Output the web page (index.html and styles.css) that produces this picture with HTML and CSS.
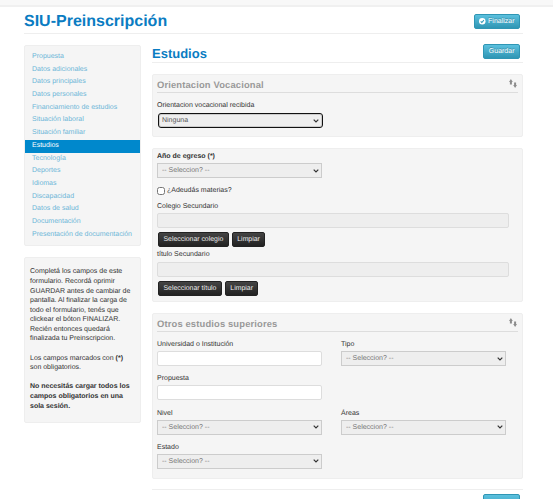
FILE: index.html
```html
<!DOCTYPE html>
<html lang="es">
<head>
 <meta charset="UTF-8">
 <title>SIU-Preinscripción</title>
 <link rel="stylesheet" href="styles.css">
</head>
<body>
 <div class="topbar"></div>
 <div class="page">
  <div class="page-header">
   <h1>SIU-Preinscripción</h1>
   <button class="btn-info btn-finalizar">
    <svg class="check" viewBox="0 0 10 10"><circle cx="5" cy="5" r="5" fill="#fff"/><path d="M2.6 5.1 4.4 6.9 7.5 3.4" fill="none" stroke="#2f96b4" stroke-width="1.6"/></svg>
    Finalizar
   </button>
  </div>
  <div class="columns">
   <div class="sidebar">
    <ul class="nav">
     <li>Propuesta</li>
     <li>Datos adicionales</li>
     <li>Datos principales</li>
     <li>Datos personales</li>
     <li>Financiamiento de estudios</li>
     <li>Situación laboral</li>
     <li>Situación familiar</li>
     <li class="active">Estudios</li>
     <li>Tecnología</li>
     <li>Deportes</li>
     <li>Idiomas</li>
     <li>Discapacidad</li>
     <li>Datos de salud</li>
     <li>Documentación</li>
     <li>Presentación de documentación</li>
    </ul>
    <div class="help">
     <p>Completá los campos de este formulario. Recordá oprimir GUARDAR antes de cambiar de pantalla. Al finalizar la carga de todo el formulario, tenés que clickear el bóton FINALIZAR. Recién entonces quedará finalizada tu Preinscripcion.</p>
     <p>Los campos marcados con <b>(*)</b> son obligatorios.</p>
     <p><b>No necesitás cargar todos los campos obligatorios en una sola sesión.</b></p>
    </div>
   </div>
   <div class="main">
    <div class="main-header">
     <h2>Estudios</h2>
     <button class="btn-info btn-guardar">Guardar</button>
    </div>

    <div class="panel panel-orientacion">
     <div class="legend">
      <span>Orientacion Vocacional</span>
      <svg class="move" viewBox="0 0 8 9"><path d="M0 3 1.9 0 3.8 3H2.9V5.6H.9V3ZM4.2 6H5.1V3.4H7.1V6H8L6.1 9Z" fill="#8c8c8c"/></svg>
     </div>
     <label class="lbl lbl-focus">Orientacion vocacional recibida</label>
     <select class="sel sel-focus"><option>Ninguna</option></select>
    </div>

    <div class="panel panel-egreso">
     <label class="lbl lbl-first"><b>Año de egreso (*)</b></label>
     <select class="sel"><option>-- Seleccion? --</option></select>
     <label class="check-row"><input type="checkbox"> ¿Adeudás materias?</label>
     <label class="lbl">Colegio Secundario</label>
     <input class="txt txt-wide" type="text" disabled>
     <div class="btn-row">
      <button class="btn-dark">Seleccionar colegio</button>
      <button class="btn-dark">Limpiar</button>
     </div>
     <label class="lbl lbl-tight">título Secundario</label>
     <input class="txt txt-wide" type="text" disabled>
     <div class="btn-row">
      <button class="btn-dark">Seleccionar título</button>
      <button class="btn-dark">Limpiar</button>
     </div>
    </div>

    <div class="panel panel-otros">
     <div class="legend">
      <span>Otros estudios superiores</span>
      <svg class="move" viewBox="0 0 8 9"><path d="M0 3 1.9 0 3.8 3H2.9V5.6H.9V3ZM4.2 6H5.1V3.4H7.1V6H8L6.1 9Z" fill="#8c8c8c"/></svg>
     </div>
     <div class="form-grid">
      <div class="field">
       <label class="lbl">Universidad o Institución</label>
       <input class="txt" type="text">
      </div>
      <div class="field">
       <label class="lbl">Tipo</label>
       <select class="sel"><option>-- Seleccion? --</option></select>
      </div>
      <div class="field">
       <label class="lbl">Propuesta</label>
       <input class="txt" type="text">
      </div>
      <div class="field"></div>
      <div class="field">
       <label class="lbl">Nivel</label>
       <select class="sel"><option>-- Seleccion? --</option></select>
      </div>
      <div class="field">
       <label class="lbl">Áreas</label>
       <select class="sel"><option>-- Seleccion? --</option></select>
      </div>
      <div class="field">
       <label class="lbl">Estado</label>
       <select class="sel"><option>-- Seleccion? --</option></select>
      </div>
     </div>
    </div>

    <div class="main-footer">
     <button class="btn-info btn-footer">Guardar</button>
    </div>
   </div>
  </div>
 </div>
</body>
</html>
```

FILE: styles.css
```css
html, body {
 height: 499px;
 overflow: hidden;
}
body {
 margin: 0;
 background: #fff;
 color: #333;
 font-family: "Liberation Sans", Arial, sans-serif;
 font-size: 7px;
 text-rendering: geometricPrecision;
}
.topbar {
 height: 5px;
 background: #f8f8f8;
 border-bottom: 2px solid #f0f0f0;
}
.page {
 width: 499px;
 margin-left: 24px;
}
.page-header {
 display: flex;
 justify-content: space-between;
 align-items: flex-start;
 height: 26px;
 border-bottom: 1px solid #eee;
}
h1 {
 margin: 6px 0 0;
 font-size: 16px;
 line-height: 18px;
 color: #0a7cc2;
}
.btn-info {
 height: 15px;
 padding: 0 4.5px;
 margin-right: 3px;
 border: 1px solid #2f96b4;
 border-radius: 2px;
 background: linear-gradient(#5bc0de, #2f96b4);
 color: #fff;
 font-family: inherit;
 font-size: 7px;
 text-rendering: inherit;
 text-shadow: 0 -1px 0 rgba(0,0,0,0.25);
}
.btn-finalizar {
 display: flex;
 align-items: center;
 gap: 2.5px;
 margin-top: 7px;
}
.btn-guardar {
 margin-top: -1px;
}
.btn-footer {
 height: 18px;
 padding-top: 3px;
}
.check {
 width: 6.5px;
 height: 6.5px;
}
.columns {
 display: flex;
 gap: 11px;
 margin-top: 11px;
}
.sidebar {
 width: 117px;
 flex: none;
}
.nav {
 margin: 0;
 padding: 5px 0 4px;
 list-style: none;
 background: #f5f5f5;
 border: 1px solid #eee;
 border-radius: 2px;
}
.nav li {
 height: 12.7px;
 line-height: 12.7px;
 padding-left: 7px;
 color: #6db6d8;
 white-space: nowrap;
}
.nav li.active {
 background: #0088cc;
 color: #fff;
}
.help {
 margin-top: 11px;
 padding: 9px 5px;
 height: 166px;
 box-sizing: border-box;
 background: #f5f5f5;
 border: 1px solid #eee;
 border-radius: 2px;
 line-height: 9.6px;
}
.help p {
 margin: 0 0 9.6px;
}
.main {
 flex: 1;
}
.main-header {
 display: flex;
 justify-content: space-between;
 align-items: flex-start;
 height: 17px;
 border-bottom: 1px solid #eee;
}
h2 {
 margin: 0;
 font-size: 13px;
 line-height: 17px;
 color: #0a7cc2;
}
.panel {
 box-sizing: border-box;
 margin-top: 11px;
 padding: 0 4px;
 background: #f5f5f5;
 border: 1px solid #eee;
 border-radius: 2px;
}
.panel-orientacion {
 height: 63px;
}
.panel-egreso {
 height: 154px;
}
.panel-otros {
 height: 166px;
}
.legend {
 display: flex;
 justify-content: space-between;
 align-items: center;
 box-sizing: border-box;
 height: 18px;
 padding-top: 2px;
 border-bottom: 1px solid #ddd;
 color: #999;
 font-size: 9.4px;
 font-weight: bold;
 letter-spacing: 0.15px;
}
.move {
 width: 8px;
 height: 9px;
 margin: -3px 1px 0 0;
}
.lbl {
 display: block;
 height: 9px;
 line-height: 9px;
 margin: 8px 0 3px;
}
.lbl-focus {
 margin-bottom: 4px;
}
.lbl-first {
 margin: 3px 0 2px;
}
.lbl-tight {
 margin: 3px 0 3px;
}
.sel {
 display: block;
 width: 165px;
 height: 15px;
 box-sizing: border-box;
 padding: 0 2px 0 4px;
 appearance: none;
 background: #eee url("data:image/svg+xml,%3Csvg xmlns='http://www.w3.org/2000/svg' width='6' height='4'%3E%3Cpath d='M.7.7 3 3 5.3.7' fill='none' stroke='%23333' stroke-width='1.2'/%3E%3C/svg%3E") no-repeat right 2px center;
 border: 1px solid #ccc;
 border-radius: 0;
 color: #777;
 font-family: inherit;
 font-size: 7px;
 text-rendering: inherit;
}
.sel-focus {
 margin-left: 2px;
 width: 163px;
 height: 13px;
 padding-left: 2px;
 outline: 1.5px solid #111;
 border-radius: 2px;
 color: #555;
}
.txt {
 display: block;
 width: 165px;
 height: 15px;
 box-sizing: border-box;
 background: #fff;
 border: 1px solid #ddd;
 border-radius: 2px;
}
.txt-wide {
 width: 352px;
 background: #eee;
}
.check-row {
 display: flex;
 align-items: center;
 gap: 2px;
 height: 9px;
 margin-top: 8px;
}
.check-row input {
 width: 8px;
 height: 8px;
 margin: 0;
}
.check-row + .lbl {
 height: 8px;
 margin-top: 7px;
}
.btn-row {
 display: flex;
 gap: 3px;
 margin: 4px 0 0 1px;
}
.btn-dark {
 height: 15px;
 padding: 0 4.5px;
 border: 1px solid #222;
 border-radius: 2px;
 background: linear-gradient(#444, #222);
 color: #f0f0f0;
 font-family: inherit;
 font-size: 6.9px;
 text-rendering: inherit;
}
.form-grid {
 display: grid;
 grid-template-columns: 165px 165px;
 column-gap: 19px;
 row-gap: 8.33px;
 margin-top: 8px;
}
.form-grid .lbl {
 height: 8px;
 margin-top: 0;
 margin-bottom: 3px;
}
.main-footer {
 display: flex;
 justify-content: flex-end;
 margin-top: 10px;
 padding-top: 4px;
 border-top: 1px solid #eee;
}
```
